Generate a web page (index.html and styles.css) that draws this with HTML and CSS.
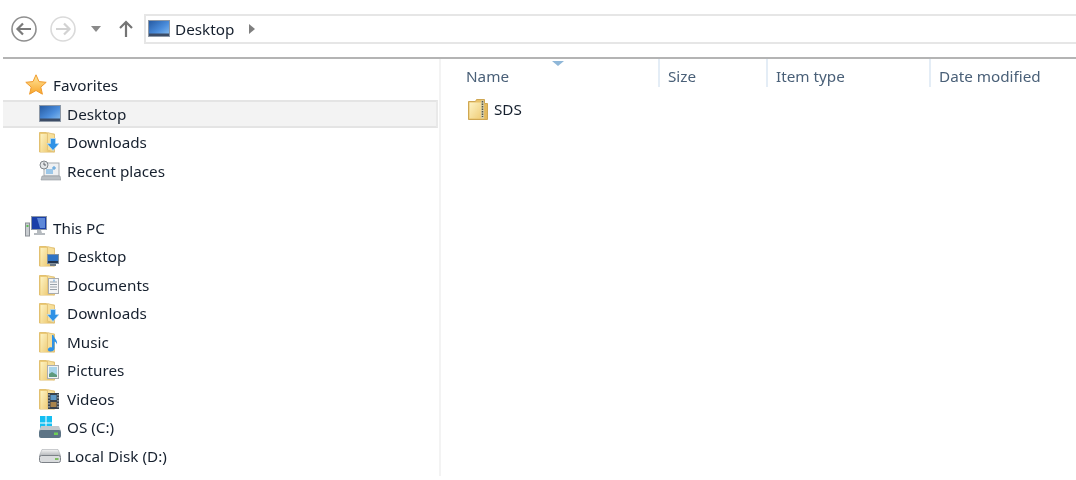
FILE: index.html
```html
<!DOCTYPE html>
<html lang="en">
<head>
<meta charset="utf-8">
<title>Desktop</title>
<link rel="stylesheet" href="styles.css">
</head>
<body>
<svg class="defs" width="0" height="0" aria-hidden="true">
  <defs>
    <linearGradient id="screen" x1="0" y1="0" x2="1" y2="1"><stop offset="0" stop-color="#24589f"/><stop offset=".55" stop-color="#4b8ddc"/><stop offset="1" stop-color="#8fc3f2"/></linearGradient>
    <linearGradient id="fold" x1="0" y1="0" x2="1" y2="1"><stop offset="0" stop-color="#fdf3c4"/><stop offset="1" stop-color="#efcd78"/></linearGradient>
    <linearGradient id="star" x1="0" y1="0" x2="0" y2="1"><stop offset="0" stop-color="#ffe9a0"/><stop offset="1" stop-color="#f8a52a"/></linearGradient>
    <linearGradient id="drive" x1="0" y1="0" x2="0" y2="1"><stop offset="0" stop-color="#f4f4f4"/><stop offset="1" stop-color="#a9adb1"/></linearGradient>
    <symbol id="monitor" viewBox="0 0 22 17">
      <rect x=".5" y=".5" width="21" height="16" fill="url(#screen)" stroke="#8d98a6"/>
      <rect x="1" y="13.500" width="20" height="2.500" fill="#3c4c66"/>
    </symbol>
    <symbol id="folder" viewBox="0 0 20 22">
      <path d="M.5 1.500h7l1 1.500h7v18h-15z" fill="#ecca76" stroke="#e2c070"/>
      <path d="M1.500 3h7v18h-7z" fill="url(#fold)"/>
      <path d="M8.500 1.500l7 2v17.500l-7-2z" fill="#f7df9a" stroke="#e0bf74" stroke-width=".8"/>
    </symbol>
    <symbol id="down" viewBox="0 0 20 22">
      <use href="#folder" width="20" height="22"/>
      <path d="M11.500 7.500h5v5h3.500l-6 7-6-7h3.500z" fill="#2f92e6" stroke="#b9def8" stroke-width=".7"/>
    </symbol>
  </defs>
</svg>

<div class="window">
  <header class="toolbar">
    <svg class="navbtn" width="28" height="28" viewBox="0 0 28 28"><circle cx="14" cy="14" r="12" fill="#fff" stroke="#8f8f8f" stroke-width="1.600"/><path d="M21 14H8M13 8.500L7.500 14l5.500 5.500" fill="none" stroke="#7a7a7a" stroke-width="2.200"/></svg>
    <svg class="navbtn forward" width="28" height="28" viewBox="0 0 28 28"><circle cx="14" cy="14" r="12" fill="#fff" stroke="#dadada" stroke-width="1.600"/><path d="M7 14h13M15 8.500l5.500 5.500-5.500 5.500" fill="none" stroke="#d2d2d2" stroke-width="2.200"/></svg>
    <svg class="caret" width="12" height="6" viewBox="0 0 12 6"><path d="M1 0h10L6 6z" fill="#8a8a8a"/></svg>
    <svg class="up" width="14" height="17" viewBox="0 0 14 17"><path d="M7 17V2M1 8l6-6 6 6" fill="none" stroke="#747474" stroke-width="2.200"/></svg>
    <div class="address">
      <svg class="addr-icon" width="22" height="17"><use href="#monitor"/></svg>
      <span class="crumb">Desktop</span>
      <svg class="crumb-arrow" width="6" height="10" viewBox="0 0 6 10"><path d="M0 0l6 5-6 5z" fill="#7f7f7f"/></svg>
    </div>
  </header>

  <main class="panes">
    <nav class="sidebar">
      <div class="row head">
        <svg class="head-icon" width="22" height="21" viewBox="0 0 22 21"><path d="M11 .8l3 6.800 7.200.7-5.400 4.800 1.600 7.100L11 16.500l-6.400 3.700 1.600-7.100L.8 8.300 8 7.600z" fill="url(#star)" stroke="#ef9a2e" stroke-width="1"/></svg>
        <span>Favorites</span>
      </div>
      <div class="row item selected"><span class="slot"><svg width="22" height="17"><use href="#monitor"/></svg></span><span>Desktop</span></div>
      <div class="row item"><span class="slot"><svg width="20" height="22"><use href="#down"/></svg></span><span>Downloads</span></div>
      <div class="row item">
        <span class="slot"><svg width="22" height="21" viewBox="0 0 22 21"><rect x="5" y="3" width="15" height="13" fill="#eef0f2" stroke="#a5abb0"/><rect x="7" y="9" width="7" height="5" fill="#9cc7e8"/><path d="M15 6v4M13 8h4" stroke="#4d9ad8"/><path d="M3 16h18l1 4H2z" fill="#b9bec2" stroke="#92989d" stroke-width=".6"/><circle cx="5" cy="5" r="4" fill="#e3e6e8" stroke="#80868b"/><path d="M5 2.500V5h2" stroke="#5c6166" fill="none"/></svg></span>
        <span>Recent places</span>
      </div>

      <div class="row head spaced">
        <svg class="head-icon" width="22" height="21" viewBox="0 0 22 21"><rect x=".5" y="7" width="4" height="13" fill="#c9cdd1" stroke="#8b9096"/><rect x="1.500" y="9" width="2" height="2" fill="#5fbe55"/><rect x="6.500" y=".5" width="15" height="13" fill="#1a3fa8" stroke="#8c98a8"/><path d="M12 2h8v10h-5z" fill="#5d88d8"/><path d="M12 14h4l1 3h3v2H9v-2h3z" fill="#b5babf"/></svg>
        <span>This PC</span>
      </div>
      <div class="row item"><span class="slot"><svg width="20" height="22" viewBox="0 0 20 22"><use href="#folder" width="20" height="22"/><rect x="8.500" y="9.500" width="11" height="9" fill="#2f73c4" stroke="#80909f"/><rect x="9" y="16" width="10" height="2" fill="#24344d"/><rect x="11" y="19" width="6" height="2" fill="#6e7a85"/></svg></span><span>Desktop</span></div>
      <div class="row item"><span class="slot"><svg width="20" height="22" viewBox="0 0 20 22"><use href="#folder" width="20" height="22"/><rect x="9.500" y="4.500" width="10" height="15" fill="#f4f5f6" stroke="#a9acb0"/><path d="M11 8h7M11 10.500h7M11 13h7M11 15.500h7" stroke="#9aa3ab"/><path d="M15 5.500v2" stroke="#4d9ad8"/></svg></span><span>Documents</span></div>
      <div class="row item"><span class="slot"><svg width="20" height="22"><use href="#down"/></svg></span><span>Downloads</span></div>
      <div class="row item"><span class="slot"><svg width="20" height="22" viewBox="0 0 20 22"><use href="#folder" width="20" height="22"/><path d="M14.500 4c0 3 4.500 5 3.500 9.500-.5-2-2-3-2.500-3v7c0 2-2 3-4 3s-3-1-2.500-2.500 2.500-2 4-1.500V4z" fill="#2f92e6"/></svg></span><span>Music</span></div>
      <div class="row item"><span class="slot"><svg width="20" height="22" viewBox="0 0 20 22"><use href="#folder" width="20" height="22"/><rect x="8.500" y="6.500" width="11" height="13" fill="#f2f4f5" stroke="#a9adb1"/><rect x="10" y="8" width="8" height="10" fill="#a8d4ea"/><path d="M10 18v-3l3-2 5 3v2z" fill="#5e9a7e"/></svg></span><span>Pictures</span></div>
      <div class="row item"><span class="slot"><svg width="20" height="22" viewBox="0 0 20 22"><use href="#folder" width="20" height="22"/><rect x="9" y="5" width="11" height="16" fill="#39424c"/><rect x="11.500" y="7" width="6" height="5" fill="#5e97c4"/><rect x="11.500" y="14" width="6" height="5" fill="#a9844c"/><path d="M10 6v14M19 6v14" stroke="#cfd4d8" stroke-dasharray="1.500 1.500"/></svg></span><span>Videos</span></div>
      <div class="row item"><span class="slot"><svg width="22" height="22" viewBox="0 0 22 22"><path d="M1 0h5.500v6.500H1zM7.500 0H13v6.500H7.500zM1 7.500h5.500V13H1zM7.500 7.500H13V13H7.500z" fill="#14bff2"/><path d="M2 10h18l2 5H0z" fill="#c3c8cc"/><rect y="14" width="22" height="8" rx="2" fill="#5d7486"/><rect x="15" y="16.500" width="4" height="2.500" fill="#6fcf56"/></svg></span><span>OS (C:)</span></div>
      <div class="row item"><span class="slot"><svg width="22" height="14" viewBox="0 0 22 14"><path d="M3 .5h16l3 7H0z" fill="url(#drive)" stroke="#a9adb1" stroke-width=".6"/><rect x=".5" y="6.500" width="21" height="7" rx="2" fill="#d9dbdd" stroke="#7c8187"/><rect x="16" y="9" width="3.500" height="2" fill="#7fbe62"/></svg></span><span>Local Disk (D:)</span></div>
    </nav>

    <section class="list">
      <div class="columns">
        <div class="col col-name">Name<svg class="sort" width="12" height="5" viewBox="0 0 12 5"><path d="M0 0h12L6 5z" fill="#8fb7d8"/></svg></div>
        <div class="col col-size">Size</div>
        <div class="col col-type">Item type</div>
        <div class="col col-date">Date modified</div>
      </div>
      <div class="file">
        <svg width="20" height="21" viewBox="0 0 20 21"><path d="M.5 2.500h7l1-2h8v4h3v16H.5z" fill="#e8c26a" stroke="#cfa752"/><path d="M1.500 3.500h12v16h-12z" fill="url(#fold)"/><path d="M13 1.500h3v18h-3z" fill="#d8d0a8"/><path d="M14.500 2v16" stroke="#54564c" stroke-dasharray="1.500 1" stroke-width="1.500"/><path d="M16.500 5h2.500v15h-2.500z" fill="#e3b95d"/></svg>
        <span>SDS</span>
      </div>
    </section>
  </main>
</div>
</body>
</html>
```

FILE: styles.css
```css
* { box-sizing: border-box; }
html, body { margin: 0; height: 100%; background: #fff; overflow: hidden; }
body { font-family: "Noto Sans", "Open Sans", sans-serif; font-size: 15.250px; color: #16202e; }
svg { display: block; flex: none; }
.defs { position: absolute; }
.window { width: 1076px; height: 480px; display: flex; flex-direction: column; filter: blur(.35px); }

.toolbar { height: 59px; margin-left: 3px; border-bottom: 2px solid #b4b4b4; display: flex; align-items: center; padding: 0 0 0 7px; }
.navbtn { margin-right: 11px; }
.forward { margin-right: 13px; }
.caret { margin-right: 17px; }
.up { margin-right: 11px; }
.address { flex: 1; height: 30px; border: 2px solid #e6e6e6; border-right: 0; display: flex; align-items: center; padding-left: 2px; }
.addr-icon { margin-right: 5px; }
.crumb-arrow { margin-left: 15px; }

.panes { flex: 1; display: flex; min-height: 0; }
.sidebar { width: 441px; height: 417px; padding-top: 12px; border-right: 2px solid #f3f3f3; flex: none; }
.row { height: 28.500px; display: flex; align-items: center; white-space: nowrap; }
.head { padding-left: 25px; gap: 6px; }
.spaced { margin-top: 28.500px; }
.head-icon { margin-top: -2px; }
.item { padding-left: 38px; }
.slot { width: 29px; display: flex; align-items: center; padding-left: 1px; }
.selected { margin-left: 3px; margin-right: 1px; padding-left: 35px; background: #f3f3f3; border-top: 2px solid #e4e4e4; border-bottom: 2px solid #e4e4e4; border-right: 2px solid #e9e9e9; }

.list { flex: 1; min-width: 0; }
.columns { display: flex; height: 28px; color: #4a6078; }
.col { border-left: 2px solid #e4edf6; padding: 7px 0 0 8px; position: relative; }
.col-name { width: 217px; border-left: 0; padding-left: 25px; }
.col-size { width: 108px; }
.col-type { width: 163px; }
.col-date { flex: 1; }
.sort { position: absolute; left: 111px; top: 2px; }
.file { display: flex; align-items: center; gap: 6px; margin: 11px 0 0 27px; height: 22px; }
```
